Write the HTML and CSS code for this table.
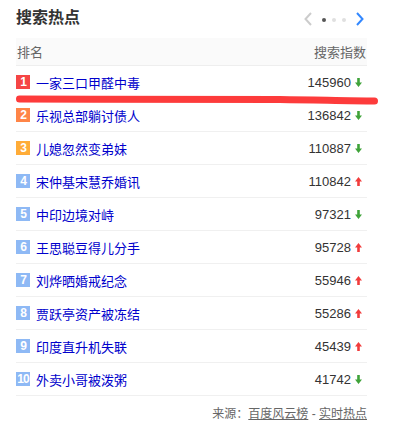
FILE: index.html
```html
<!DOCTYPE html>
<html lang="zh">
<head>
<meta charset="utf-8">
<link rel="stylesheet" href="styles.css">
</head>
<body>
<div class="panel">
  <div class="title-bar">
    <h2 class="title">搜索热点</h2>
    <div class="pager">
      <svg class="chev" width="8" height="14" viewBox="0 0 8 14"><path d="M7 1 L1.5 7 L7 13" fill="none" stroke="#cccccc" stroke-width="2"/></svg>
      <span class="dot dot-on"></span>
      <span class="dot"></span>
      <span class="dot"></span>
      <svg class="chev" width="8" height="14" viewBox="0 0 8 14"><path d="M1 1 L6.5 7 L1 13" fill="none" stroke="#3388ff" stroke-width="2"/></svg>
    </div>
  </div>
  <div class="table">
    <div class="head"><span>排名</span><span>搜索指数</span></div>
    <div class="row"><span class="badge b1">1</span><a class="name">一家三口甲醛中毒</a><span class="num">145960</span><svg class="arr" width="7" height="9" viewBox="0 0 7 9"><path d="M2.2 0 H4.8 V4.5 H7 L3.5 9 L0 4.5 H2.2 Z" fill="#3fa33a"/></svg></div>
    <div class="row"><span class="badge b2">2</span><a class="name">乐视总部躺讨债人</a><span class="num">136842</span><svg class="arr" width="7" height="9" viewBox="0 0 7 9"><path d="M2.2 0 H4.8 V4.5 H7 L3.5 9 L0 4.5 H2.2 Z" fill="#3fa33a"/></svg></div>
    <div class="row"><span class="badge b3">3</span><a class="name">儿媳忽然变弟妹</a><span class="num">110887</span><svg class="arr" width="7" height="9" viewBox="0 0 7 9"><path d="M2.2 0 H4.8 V4.5 H7 L3.5 9 L0 4.5 H2.2 Z" fill="#3fa33a"/></svg></div>
    <div class="row"><span class="badge">4</span><a class="name">宋仲基宋慧乔婚讯</a><span class="num">110842</span><svg class="arr" width="7" height="9" viewBox="0 0 7 9"><path d="M2.2 9 H4.8 V4.5 H7 L3.5 0 L0 4.5 H2.2 Z" fill="#f13c3c"/></svg></div>
    <div class="row"><span class="badge">5</span><a class="name">中印边境对峙</a><span class="num">97321</span><svg class="arr" width="7" height="9" viewBox="0 0 7 9"><path d="M2.2 0 H4.8 V4.5 H7 L3.5 9 L0 4.5 H2.2 Z" fill="#3fa33a"/></svg></div>
    <div class="row"><span class="badge">6</span><a class="name">王思聪豆得儿分手</a><span class="num">95728</span><svg class="arr" width="7" height="9" viewBox="0 0 7 9"><path d="M2.2 9 H4.8 V4.5 H7 L3.5 0 L0 4.5 H2.2 Z" fill="#f13c3c"/></svg></div>
    <div class="row"><span class="badge">7</span><a class="name">刘烨晒婚戒纪念</a><span class="num">55946</span><svg class="arr" width="7" height="9" viewBox="0 0 7 9"><path d="M2.2 9 H4.8 V4.5 H7 L3.5 0 L0 4.5 H2.2 Z" fill="#f13c3c"/></svg></div>
    <div class="row"><span class="badge">8</span><a class="name">贾跃亭资产被冻结</a><span class="num">55286</span><svg class="arr" width="7" height="9" viewBox="0 0 7 9"><path d="M2.2 9 H4.8 V4.5 H7 L3.5 0 L0 4.5 H2.2 Z" fill="#f13c3c"/></svg></div>
    <div class="row"><span class="badge">9</span><a class="name">印度直升机失联</a><span class="num">45439</span><svg class="arr" width="7" height="9" viewBox="0 0 7 9"><path d="M2.2 9 H4.8 V4.5 H7 L3.5 0 L0 4.5 H2.2 Z" fill="#f13c3c"/></svg></div>
    <div class="row"><span class="badge">10</span><a class="name">外卖小哥被泼粥</a><span class="num">41742</span><svg class="arr" width="7" height="9" viewBox="0 0 7 9"><path d="M2.2 0 H4.8 V4.5 H7 L3.5 9 L0 4.5 H2.2 Z" fill="#3fa33a"/></svg></div>
  </div>
  <div class="foot">来源：<a class="src">百度风云榜</a> - <a class="src">实时热点</a></div>
  <svg class="mark" width="380" height="20" viewBox="0 0 380 20"><path d="M19.5 10 C 120 10.5, 250 10, 280 10.5 C 320 11, 350 12, 374.5 12" fill="none" stroke="#fd3b3b" stroke-width="7" stroke-linecap="round"/></svg>
</div>
</body>
</html>
```

FILE: styles.css
```css
* { box-sizing: border-box; }
body {
  margin: 0;
  background: #fff;
  font-family: Arial, "Liberation Sans", "Noto Sans CJK SC", sans-serif;
}
.panel {
  position: relative;
  width: 367px;
  padding-left: 16px;
}
.title-bar {
  height: 38px;
  display: flex;
  align-items: center;
  justify-content: space-between;
  padding-bottom: 2px;
}
.title {
  margin: 0;
  font-size: 16px;
  font-weight: bold;
  color: #333;
  line-height: 20px;
}
.pager {
  display: flex;
  align-items: center;
  gap: 6px;
  margin-right: 3px;
  padding-top: 1px;
}
.chev { display: block; }
.pager .chev:first-child { margin-right: 4px; }
.pager .chev:last-child { margin-left: 4px; }
.dot {
  width: 4px;
  height: 4px;
  border-radius: 50%;
  background: #e0e0e0;
  margin-top: 2px;
}
.dot-on { background: #555; }
.head {
  height: 28px;
  background: #fafafa;
  border-bottom: 1px solid #eeeeee;
  display: flex;
  align-items: center;
  justify-content: space-between;
  font-size: 13px;
  color: #666;
  padding: 0 1px;
}
.row {
  height: 33px;
  border-bottom: 1px solid #f0f0f0;
  display: flex;
  align-items: center;
  padding-right: 5px;
}
.badge {
  width: 14px;
  height: 14px;
  background: #8eb9f5;
  color: #fff;
  font-size: 12px;
  font-weight: bold;
  line-height: 14px;
  text-align: center;
  letter-spacing: -1px;
  margin-right: 6px;
}
.badge.b1 { background: #f54545; }
.badge.b2 { background: #ff8547; }
.badge.b3 { background: #ffac38; }
.name {
  flex: 1;
  color: #0000cc;
  font-size: 13px;
}
.num {
  font-size: 13px;
  color: #333;
  margin-right: 4px;
}
.arr { display: block; }
.foot {
  text-align: right;
  font-size: 12px;
  color: #666;
  padding-top: 8px;
}
.src {
  color: #666;
  text-decoration: underline;
}
.mark {
  position: absolute;
  left: 0;
  top: 89px;
}
```
